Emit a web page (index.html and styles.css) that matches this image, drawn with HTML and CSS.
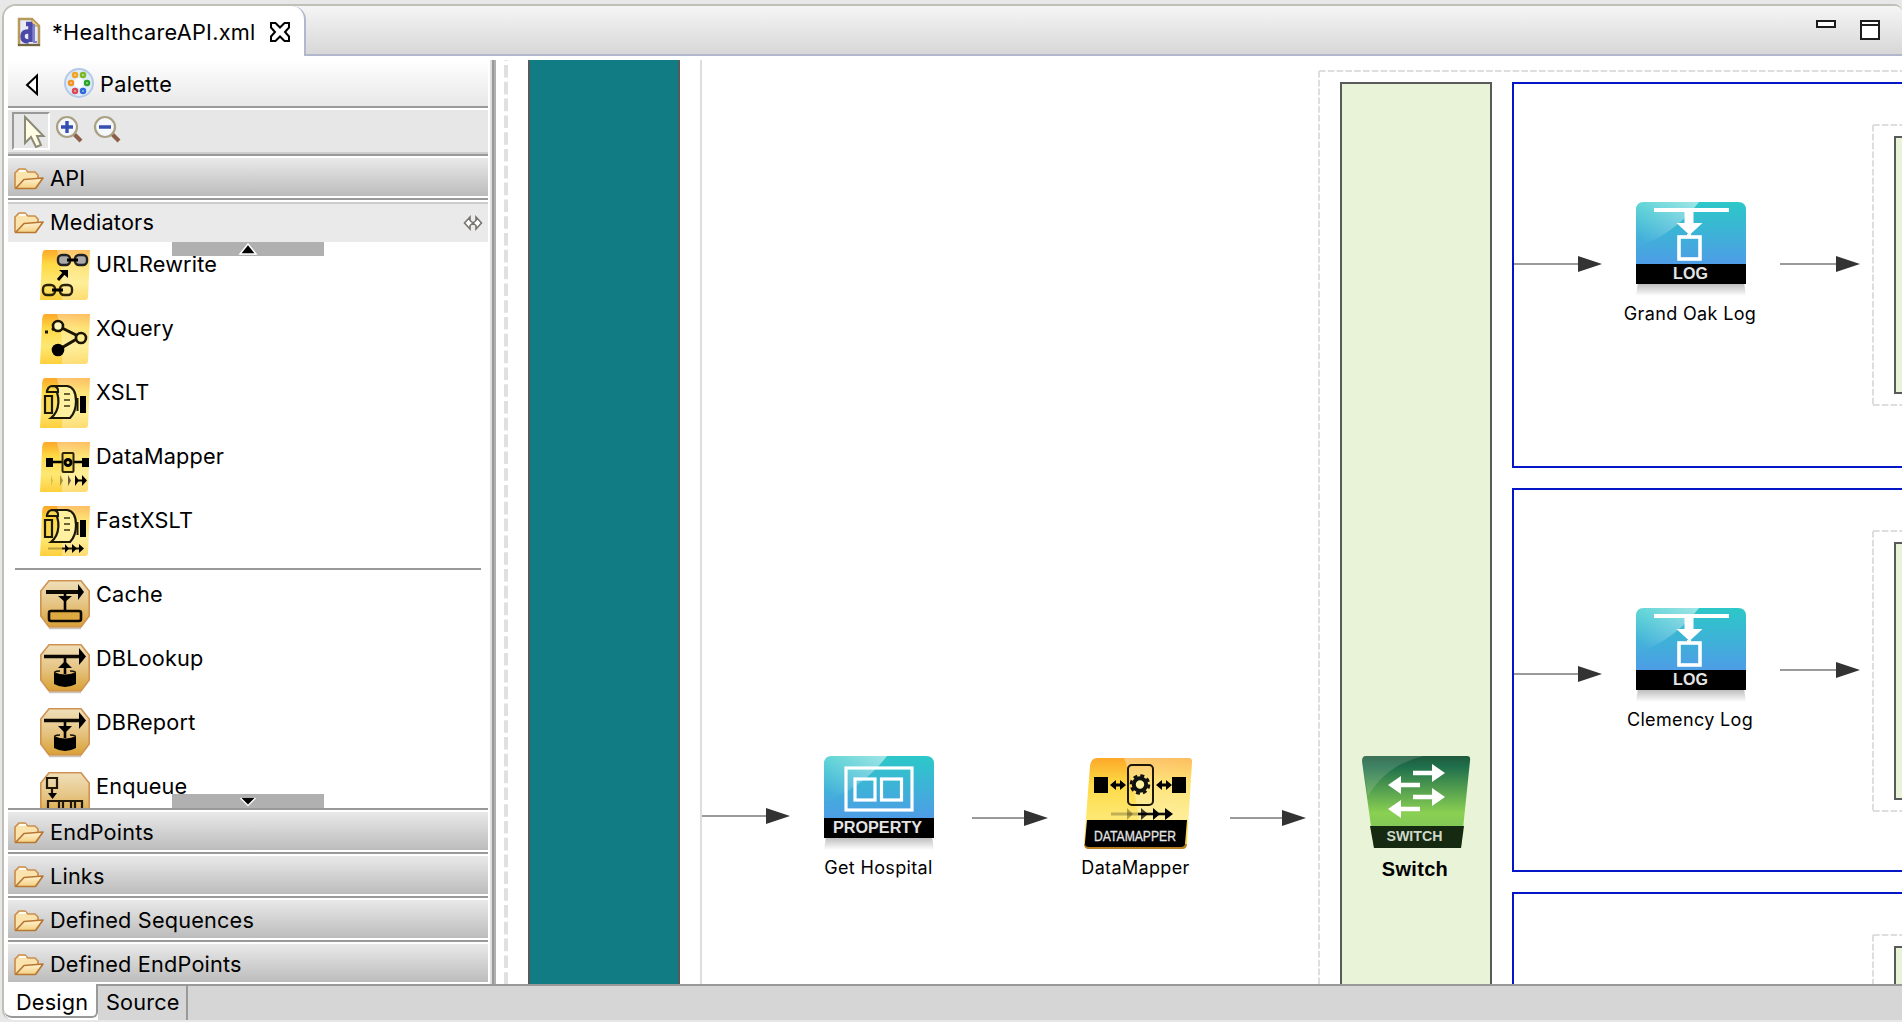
FILE: index.html
```html
<!DOCTYPE html>
<html lang="en">
<head>
<meta charset="utf-8">
<title>HealthcareAPI.xml</title>
<link rel="stylesheet" href="styles.css">
</head>
<body>
<svg class="defs" width="0" height="0" aria-hidden="true">
  <defs>
    <linearGradient id="blue" x1="0" y1="0" x2="0" y2="1"><stop offset="0" stop-color="#2cc8c8"/><stop offset="1" stop-color="#509ae8"/></linearGradient>
    <linearGradient id="shine" x1="1" y1="0" x2="0.1" y2="1"><stop offset="0" stop-color="#fff" stop-opacity=".55"/><stop offset=".9" stop-color="#fff" stop-opacity=".02"/></linearGradient>
    <linearGradient id="shadow" x1="0" y1="0" x2="0" y2="1"><stop offset="0" stop-color="#b4b4b4"/><stop offset="1" stop-color="#fff"/></linearGradient>
    <linearGradient id="yellow" x1="0" y1="0" x2="0" y2="1"><stop offset="0" stop-color="#fca829"/><stop offset=".28" stop-color="#fdd944"/><stop offset=".65" stop-color="#fee873"/><stop offset="1" stop-color="#fdcf3c"/></linearGradient>
    <linearGradient id="gloss" x1="0" y1="0" x2="1" y2="0"><stop offset="0" stop-color="#fff" stop-opacity=".35"/><stop offset="1" stop-color="#fff" stop-opacity=".25"/></linearGradient>
    <linearGradient id="tan" x1="0" y1="0" x2="0" y2="1"><stop offset="0" stop-color="#f0dfba"/><stop offset=".5" stop-color="#e6c584"/><stop offset="1" stop-color="#d8a136"/></linearGradient>
    <linearGradient id="green" x1="0" y1="0" x2="0" y2="1"><stop offset="0" stop-color="#1d5a3c"/><stop offset=".12" stop-color="#20704c"/><stop offset=".62" stop-color="#8ad052"/><stop offset="1" stop-color="#74bc60"/></linearGradient>
    <linearGradient id="foldfill" x1="0" y1="0" x2="0" y2="1"><stop offset="0" stop-color="#fff3d2"/><stop offset="1" stop-color="#f4cf80"/></linearGradient>
    <symbol id="folder" viewBox="0 0 30 22">
      <path d="M1 20V5L5 1h6l3 3h7l3 3v4" fill="#fbe3ad" stroke="#c98f4e" stroke-width="1.7"/>
      <path d="M1.5 20.5L10 11.5 29 10 21.500 20.500Z" fill="url(#foldfill)" stroke="#b87733" stroke-width="1.7" stroke-linejoin="round"/>
      <path d="M5 3h7" stroke="#fffaf0" stroke-width="2"/>
    </symbol>
    <symbol id="ytile" viewBox="0 0 50 50">
      <path d="M5 0H50L48 47Q48 50 45 50H0L2 8Q2 0 5 0Z" fill="url(#yellow)"/>
      <path d="M17 0H50L48 50H22Q24 25 17 0Z" fill="url(#gloss)"/>
    </symbol>
    <symbol id="ttile" viewBox="0 0 50 50">
      <path d="M9 48.500H41" stroke="#c9c4bc" stroke-width="1.500"/>
      <path d="M9 .8H41L49.200 11V36L41 47H9L.8 36V11Z" fill="url(#tan)" stroke="#cf9352" stroke-width="1.600"/>
    </symbol>
    <symbol id="scroll" viewBox="0 0 50 50">
      <path d="M13 5H27C34 6 36 12 36 20C36 28 34 33 30 37H11C20 30 21 14 13 5Z" fill="#fff1a0" stroke="#1c1808" stroke-width="2.200"/>
      <path d="M7 12Q7 5 13 5Q19 6 18 11H7ZM5 15h7v17H5Z" fill="#f8d74c" stroke="#1c1808" stroke-width="2.200"/>
      <path d="M24 13h6M24 19h6M24 25h6" stroke="#3a3412" stroke-width="1.700"/>
      <path d="M40 15h6v17h-6z"/><path d="M37.500 17V30" stroke="#1c1808" stroke-width="2"/>
    </symbol>
    <symbol id="log" viewBox="0 0 110 94">
      <path d="M2 80H108L110 94H0Z" fill="url(#shadow)"/>
      <path d="M0 66V8Q0 0 8 0H102Q110 0 110 8V66Z" fill="url(#blue)"/>
      <path d="M0 8Q0 0 8 0H63Q40 30 5 44L0 46Z" fill="url(#shine)"/>
      <path d="M18 8H93M53 8V24M53 32V36" stroke="#fff" stroke-width="4"/>
      <path d="M48.500 9h9v12h9l-13 12-13-12h8z" fill="#fff"/>
      <rect x="43" y="35" width="21" height="22" fill="none" stroke="#fff" stroke-width="3.600"/>
      <path d="M0 62H110V82H0Z"/>
      <text x="54.500" y="77" class="badge" text-anchor="middle" textLength="35">LOG</text>
    </symbol>
  </defs>
</svg>
<div class="window">
  <header class="tabbar">
    <div class="tab">
      <svg class="file-icon" width="24" height="30" viewBox="0 0 24 30"><path d="M2 2H15L22 9V28H2Z" fill="#e8e9f4" stroke="#b79a5a" stroke-width="2.500"/><path d="M15 2V9H22Z" fill="#eacb85" stroke="#b79a5a"/><path d="M1 28H23" stroke="#6e6647" stroke-width="2"/><path d="M13.500 6V25M11.500 14.500Q5.500 14 5.500 19.500Q5.500 24.500 11.500 24.500M9 7H15" fill="none" stroke="#4a49a8" stroke-width="4.500"/><path d="M17 7V25H20" stroke="#7f82d2" stroke-width="2" fill="none"/></svg>
      <span class="t tab-title">*HealthcareAPI.xml</span>
      <svg class="close" width="22" height="22" viewBox="0 0 22 22"><path d="M2 2H6.500L11 6.500 15.500 2H20V6.500L16 11 20 15.500V20H15.500L11 15.500 6.500 20H2V15.500L6 11 2 6.500Z" fill="#fff" stroke="#000" stroke-width="2"/></svg>
    </div>
    <div class="tab-fill">
      <svg width="70" height="26" viewBox="0 0 70 26"><rect x="2" y="2" width="18" height="6" fill="#fff" stroke="#1c1c1c" stroke-width="2"/><rect x="46" y="2" width="18" height="18" fill="#fff" stroke="#1c1c1c" stroke-width="2"/><path d="M46 6H64" stroke="#1c1c1c" stroke-width="2"/></svg>
    </div>
  </header>
  <main class="editor">
    <aside class="palette">
      <div class="palette-head">
        <svg class="back" width="14" height="24" viewBox="0 0 14 24"><path d="M12 2.500V21L2 12Z" fill="#fff" stroke="#000" stroke-width="2"/></svg>
        <svg class="pal-icon" width="30" height="30" viewBox="0 0 30 30"><circle cx="15" cy="15" r="14" fill="#dfebf8" stroke="#b4c9e6" stroke-width="2"/><circle cx="15" cy="15" r="5" fill="#fafdff"/><g fill="#ffe" stroke-width="2.500"><circle cx="11" cy="7" r="2" stroke="#f0a522"/><circle cx="19" cy="7" r="2" stroke="#7bb927"/><circle cx="7" cy="15" r="2" stroke="#f19325"/><circle cx="23" cy="15" r="2" stroke="#2aa42a"/><circle cx="11" cy="23" r="2" stroke="#d94a55"/><circle cx="19" cy="23" r="2" stroke="#2d69dc"/></g></svg>
        <span class="t">Palette</span>
      </div>
      <div class="tools">
        <span class="tool-on"><svg width="22" height="34" viewBox="0 0 22 34"><path d="M2 2V28L8 22 13 32 18 30 14 21H20.500Z" fill="#fffde4" stroke="#8d8a78" stroke-width="2"/></svg></span>
        <svg width="28" height="28" viewBox="0 0 28 28"><path d="M18 18L26 26" stroke="#8c5f48" stroke-width="4"/><circle cx="12" cy="12" r="10" fill="#f4f8fc" stroke="#aaa184" stroke-width="2.200"/><path d="M6 12H18M12 6V18" stroke="#344fb0" stroke-width="3.400"/></svg>
        <svg width="28" height="28" viewBox="0 0 28 28"><path d="M18 18L26 26" stroke="#8c5f48" stroke-width="4"/><circle cx="12" cy="12" r="10" fill="#f4f8fc" stroke="#aaa184" stroke-width="2.200"/><path d="M6 12H18" stroke="#344fb0" stroke-width="3.400"/></svg>
      </div>
      <div class="drawer"><svg class="folder" width="30" height="22"><use href="#folder"/></svg><span class="t">API</span></div>
      <div class="drawer open"><svg class="folder" width="30" height="22"><use href="#folder"/></svg><span class="t">Mediators</span>
        <svg class="pin" width="20" height="14" viewBox="0 0 20 14"><path d="M7 1L1.500 7 7 13V9.500L10 7 7 4.500ZM13 1L18.500 7 13 13V9.500L10 7 13 4.500Z" fill="#fff" stroke="#77756d" stroke-width="1.600"/></svg></div>
      <div class="items">
        <div class="item"><svg width="50" height="50" viewBox="0 0 50 50"><use href="#ytile"/><g fill="#aaa" stroke="#222" stroke-width="2.400"><rect x="18" y="5" width="12" height="10" rx="4"/><rect x="35" y="5" width="12" height="10" rx="4"/></g><g fill="none" stroke="#2c2408" stroke-width="2.400"><rect x="3" y="35" width="12" height="10" rx="4"/><rect x="20" y="35" width="12" height="10" rx="4"/></g><path d="M27 10H38M12 40H23M18 30L25 22" stroke="#000" stroke-width="3"/><path d="M19 20H28V28Z"/></svg><span class="t">URLRewrite</span></div>
        <div class="item"><svg width="50" height="50" viewBox="0 0 50 50"><use href="#ytile"/><path d="M12 16L18 12L40 23L18 36M5 18H8" fill="none" stroke="#1b1604" stroke-width="3"/><circle cx="18" cy="12" r="5" fill="#fff5bd" stroke="#1b1604" stroke-width="2.600"/><circle cx="41" cy="24" r="5" fill="#ffec8d" stroke="#1b1604" stroke-width="2.600"/><circle cx="18" cy="36" r="6.300"/></svg><span class="t">XQuery</span></div>
        <div class="item"><svg width="50" height="50" viewBox="0 0 50 50"><use href="#ytile"/><use href="#scroll" y="3"/></svg><span class="t">XSLT</span></div>
        <div class="item"><svg width="50" height="50" viewBox="0 0 50 50"><use href="#ytile"/><path d="M10 20H46" stroke="#000" stroke-width="2.500"/><path d="M6 16h7v9H6zM42 16h7v9h-7z"/><rect x="22.500" y="11" width="11" height="19" rx="1" fill="#f8d95a" stroke="#2b2408" stroke-width="2"/><circle cx="28" cy="20.500" r="3" fill="none" stroke="#000" stroke-width="3"/><path d="M36 38.500H46" stroke="#000" stroke-width="2"/><path d="M35 33l4 5.500-4 5.500zM42 33l5 5.500-5 5.500z"/><path d="M28 33l3 5.500-3 5.500z" opacity=".6"/><path d="M20 33l3 5.500-3 5.500z" opacity=".35"/><path d="M11 33l2 5.500-2 5.500z" opacity=".15"/></svg><span class="t">DataMapper</span></div>
        <div class="item"><svg width="50" height="50" viewBox="0 0 50 50"><use href="#ytile"/><use href="#scroll" y="-1"/><path d="M22 42.500H42" stroke="#221c06" stroke-width="2"/><path d="M8 42.500H22" stroke="#221c06" stroke-width="2" opacity=".3"/><path d="M32 38l5 4.500-5 4.500zM39 38l5 4.500-5 4.500zM25 38l4 4.500-4 4.500z"/></svg><span class="t">FastXSLT</span></div>
        <hr class="rule">
        <div class="item"><svg width="50" height="50" viewBox="0 0 50 50"><use href="#ttile"/><path d="M6 12H40" stroke="#0c0903" stroke-width="4"/><path d="M38 4l6 8-6 8z"/><path d="M25 13V31" stroke="#000" stroke-width="2.600"/><path d="M18 16H32L25 22Z"/><rect x="9" y="31" width="32" height="10" rx="2" fill="#dda941" stroke="#0c0903" stroke-width="2.600"/></svg><span class="t">Cache</span></div>
        <div class="item"><svg width="50" height="50" viewBox="0 0 50 50"><use href="#ttile"/><path d="M4 12.500H40" stroke="#0c0903" stroke-width="3.600"/><path d="M39 4l7 8.500-7 8.500z"/><path d="M25 14V30" stroke="#000" stroke-width="2.600"/><path d="M18 24L25 17 32 24ZM14 28Q25 33 36 28V40Q25 46 14 40Z"/><path d="M20 27Q12 27 16 30M30 27Q38 27 34 30" fill="none" stroke="#1a1408" stroke-width="1.500"/></svg><span class="t">DBLookup</span></div>
        <div class="item"><svg width="50" height="50" viewBox="0 0 50 50"><use href="#ttile"/><path d="M4 12.500H40" stroke="#0c0903" stroke-width="3.600"/><path d="M39 4l7 8.500-7 8.500z"/><path d="M25 14V30" stroke="#000" stroke-width="2.600"/><path d="M18 18L25 25 32 18ZM14 28Q25 33 36 28V40Q25 46 14 40Z"/><path d="M20 27Q12 27 16 30M30 27Q38 27 34 30" fill="none" stroke="#1a1408" stroke-width="1.500"/></svg><span class="t">DBReport</span></div>
        <div class="item"><svg width="50" height="50" viewBox="0 0 50 50"><use href="#ttile"/><path d="M7 6H17V16H7ZM12 16V24M8 44V29H42V44M19 29V44M23 29V44M31 29V44M35 29V44" fill="none" stroke="#1f1808" stroke-width="2.200"/><path d="M8 21H17L12.500 27Z"/></svg><span class="t">Enqueue</span></div>
        <div class="scroll up"><svg width="18" height="12" viewBox="0 0 18 12"><path d="M1 11L9 1 17 11Z" fill="#000" stroke="#fff" stroke-width="1.500"/></svg></div>
        <div class="scroll down"><svg width="18" height="10" viewBox="0 0 18 10"><path d="M1.500 1H16.500L9 9Z"/><path d="M1.500 1L9 8.500 16.500 1" fill="none" stroke="#fff" stroke-width="1.500"/></svg></div>
      </div>
      <div class="drawer"><svg class="folder" width="30" height="22"><use href="#folder"/></svg><span class="t">EndPoints</span></div>
      <div class="drawer"><svg class="folder" width="30" height="22"><use href="#folder"/></svg><span class="t">Links</span></div>
      <div class="drawer"><svg class="folder" width="30" height="22"><use href="#folder"/></svg><span class="t">Defined Sequences</span></div>
      <div class="drawer"><svg class="folder" width="30" height="22"><use href="#folder"/></svg><span class="t">Defined EndPoints</span></div>
    </aside>
    <div class="sash"></div>
    <!-- Diagram: coordinates are offset by the canvas origin (500, 60) -->
    <section class="canvas">
      <svg class="lines" width="1402" height="924" viewBox="500 60 1402 924">
        <path d="M506 48.200V990" stroke="#e0e0e0" stroke-width="4" stroke-dasharray="12.600 4.200"/>
        <rect x="529" y="50" width="150" height="950" fill="#127c84" stroke="#58595a" stroke-width="2"/>
        <path d="M701 60V990" stroke="#dedede" stroke-width="2"/>
        <g fill="none" stroke="#dedede" stroke-width="2" stroke-dasharray="6.600 2.200">
          <path d="M1319 71V990"/><path d="M1319 71H1902"/>
          <path d="M1873 125V405"/><path d="M1873 125H1902"/><path d="M1873 405H1902"/>
          <path d="M1873 531V811"/><path d="M1873 531H1902"/><path d="M1873 811H1902"/>
          <path d="M1873 935V990"/><path d="M1873 935H1902"/>
        </g>
        <g fill="#e8f3d8" stroke="#595a5a" stroke-width="2">
          <rect x="1341" y="83" width="150" height="950"/>
          <rect x="1895" y="137" width="150" height="256"/><rect x="1895" y="543" width="150" height="256"/><rect x="1895" y="947" width="150" height="256"/>
        </g>
        <g fill="none" stroke="#0516c6" stroke-width="2"><rect x="1513" y="83" width="500" height="384"/><rect x="1513" y="489" width="500" height="382"/><rect x="1513" y="893" width="500" height="382"/></g>
        <path d="M702 816H768M972 818H1026M1230 818H1284M1514 264H1580M1780 264H1838M1514 674H1580M1780 670H1838" stroke="#9a9a9a" stroke-width="2"/>
        <path d="M766 808l24 8-24 8zM1024 810l24 8-24 8zM1282 810l24 8-24 8zM1578 256l24 8-24 8zM1836 256l24 8-24 8zM1578 666l24 8-24 8zM1836 662l24 8-24 8z" fill="#333"/>
      </svg>
      <div class="node property"><svg width="110" height="94" viewBox="0 0 110 94"><path d="M2 80H108L110 94H0Z" fill="url(#shadow)"/><path d="M0 66V8Q0 0 8 0H102Q110 0 110 8V66Z" fill="url(#blue)"/><path d="M0 8Q0 0 8 0H63Q40 30 5 44L0 46Z" fill="url(#shine)"/><g fill="none" stroke="#fff" stroke-width="3.200"><rect x="22" y="12" width="66" height="42"/><rect x="31" y="23" width="20" height="21"/><rect x="57.500" y="23" width="20" height="21"/></g><path d="M0 62H110V82H0Z"/><text x="53.500" y="77" class="badge" text-anchor="middle" textLength="89" lengthAdjust="spacingAndGlyphs">PROPERTY</text></svg><span class="label l-hospital">Get Hospital</span></div>
      <div class="node mapper"><svg width="110" height="94" viewBox="0 0 110 94"><path d="M14 2H106Q109 2 109 5L104 88Q104 92 100 93H5Q1 92 1 87L7 10Q8 2 14 2Z" fill="url(#yellow)"/><path d="M41 2H109L106 64H56Q52 30 41 2Z" fill="url(#gloss)"/><path d="M2 88Q2 92 6 92H99Q103 92 103 88" fill="none" stroke="#b87e22" stroke-width="2"/><path d="M4 64H104L102 88Q102 91 98 91H6Q1 91 2 86Z"/><path d="M11 21h14v16H11zM89 21h14v16H89z"/><path d="M30 29H40M76 29H86" stroke="#000" stroke-width="3"/><path d="M27 29l6-5v10zM43 29l-6-5v10zM73 29l6-5v10zM89 29l-6-5v10z"/><rect x="45" y="9" width="25" height="40" rx="4" fill="none" stroke="#1c1706" stroke-width="2"/><circle cx="57" cy="28.500" r="6.200" fill="#fff2a0" stroke="#111" stroke-width="4"/><circle cx="57" cy="28.500" r="9" fill="none" stroke="#111" stroke-width="2.600" stroke-dasharray="4 3.070"/><path d="M55 58H84" stroke="#111" stroke-width="2.600"/><path d="M28 58H55" stroke="#111" stroke-width="3" opacity=".25"/><path d="M82 52l8 6-8 6zM70 52l7 6-7 6z"/><path d="M58 52l7 6-7 6z" opacity=".75"/><path d="M44 52l6 6-6 6z" opacity=".3"/><text x="11" y="85" class="badge thin" textLength="82" lengthAdjust="spacingAndGlyphs">DATAMAPPER</text></svg><span class="label l-mapper">DataMapper</span></div>
      <div class="node switch"><svg width="110" height="94" viewBox="0 0 110 94"><path d="M4 0H105Q109 0 108 5L99 92H12L0 5Q0 0 4 0Z" fill="url(#green)"/><path d="M0 5Q0 0 4 0H62Q25 8 6 40Z" fill="#fff" opacity=".14"/><path d="M8 70H102L99 92H12Z" fill="#152a10"/><path d="M51 17H74M36 29H58M51 41H74M36 53H58" stroke="#fff" stroke-width="4.600"/><path d="M70 8l13 9-13 9zM39 20l-13 9 13 9zM70 32l13 9-13 9zM39 44l-13 9 13 9z" fill="#fff"/><text x="24.500" y="85" class="badge small" textLength="56" lengthAdjust="spacingAndGlyphs">SWITCH</text></svg><span class="label l-switch">Switch</span></div>
      <div class="node log-a"><svg width="110" height="94"><use href="#log"/></svg><span class="label l-grand">Grand Oak Log</span></div>
      <div class="node log-b"><svg width="110" height="94"><use href="#log"/></svg><span class="label l-clem">Clemency Log</span></div>
    </section>
  </main>
  <footer class="views"><span class="view active t">Design</span><span class="view t">Source</span><span class="view-fill"></span></footer>
</div>
</body>
</html>
```
FILE: styles.css
```css
* { box-sizing: border-box; }
body { margin: 0; width: 1902px; height: 1022px; overflow: hidden; background: #e8e8e8; font-family: Inter, "Liberation Sans", sans-serif; color: #000; }
svg { display: block; flex: none; overflow: visible; }
.defs { position: absolute; }
.t { font-size: 21.7px; line-height: 26px; white-space: nowrap; letter-spacing: 0.18px; }
.window { margin: 4px 0 0 2px; width: 1900px; height: 1016px; border: 2px solid #c0c0b8; border-right: 0; border-bottom: 0; border-radius: 14px 8px 0 10px; background: #fff; overflow: hidden; display: flex; flex-direction: column; }
.tabbar { display: flex; height: 50px; flex: none; background: linear-gradient(#f5f5f5, #d6d6d6); }
.tab { display: flex; align-items: flex-start; width: 302px; background: #fff; border-right: 2px solid #b2b7cc; border-radius: 0 14px 0 0; }
.file-icon { margin: 11px 0 0 13px; }
.tab-title { margin: 13px 0 0 11px; width: 205px; letter-spacing: 0.25px; }
.close { margin: 15px 0 0 12px; }
.tab-fill { flex: 1; border-bottom: 2px solid #b2b7cc; display: flex; justify-content: flex-end; padding: 13px 17px 0 0; }
.editor { flex: none; height: 928px; padding: 4px 0 0 4px; display: flex; }
.palette { width: 480px; height: 924px; display: flex; flex-direction: column; }
.palette-head { height: 48px; background: linear-gradient(#fff, #e8e8e8); border-bottom: 2px solid #999; display: flex; flex: none; }
.back { margin: 13px 0 0 17px; }
.pal-icon { margin: 8px 6px 0 25px; }
.palette-head .t { margin-top: 11px; letter-spacing: 0.3px; }
.tools { height: 46px; flex: none; margin-top: 2px; background: #e7e7e7; border-bottom: 2px solid #999; box-shadow: inset 0 -2px #ccc; display: flex; }
.tools > svg { margin: 5px 0 0 10px; }
.tools > .tool-on + svg { margin-left: 5px; }
.tool-on { width: 38px; height: 38px; margin: 2px 0 0 4px; border: 2px solid #fff; border-top-color: #999; border-left-color: #999; padding: 1px 0 0 9px; }
.drawer { display: flex; flex: none; height: 38px; margin-top: 2px; padding-left: 6px; background: linear-gradient(#e9e9e9, #bcbcbc); position: relative; }
.drawer + .drawer { margin-top: 6px; }
.drawer + .drawer::before { content: ""; position: absolute; left: 0; right: 0; top: -4px; height: 2px; background: #999; }
.folder { margin: 10px 0 0; }
.drawer .t { margin: 7px 0 0 6px; }
.drawer + .drawer.open { margin-top: 8px; background: #eaeaea; box-shadow: 0 -2px #ccc; }
.drawer + .drawer.open::before { top: -6px; }
.drawer.open .folder { margin-top: 8px; }
.drawer.open .t { margin-top: 5px; }
.pin { margin: 12px 5px 0 auto; }
.items { position: relative; height: 568px; flex: none; overflow: hidden; border-bottom: 2px solid #999; padding: 8px 7px 0; }
.item { display: flex; height: 50px; margin: 0 0 14px 25px; }
.item .t { margin: 1px 0 0 6px; }
.rule { border: 0; height: 2px; background: #999; margin: -2px 0 10px; }
.scroll { position: absolute; left: 164px; width: 152px; height: 14px; background: #b0b0b0; display: flex; justify-content: center; }
.up { top: 0; padding-top: 1px; }
.down { bottom: 0; padding-top: 3px; }
.sash { width: 6px; margin-left: 2px; background: linear-gradient(90deg, #dedede 2px, #999 2px, #999 4px, #b0b0b0 4px); }
.canvas { position: relative; width: 1402px; height: 924px; margin-left: 4px; overflow: hidden; }
.lines { position: absolute; left: 0; top: 0; }
.node { position: absolute; width: 110px; display: flex; flex-direction: column; align-items: center; }
.property { left: 324px; top: 696px; }
.mapper { left: 583px; top: 696px; }
.switch { left: 862px; top: 696px; }
.log-a { left: 1136px; top: 142px; }
.log-b { left: 1136px; top: 548px; }
.label { margin-top: 6px; margin-left: -1px; font-size: 18px; line-height: 24px; letter-spacing: 0.35px; white-space: nowrap; }
.l-mapper { margin-left: -5px; }
.l-clem, .l-grand { margin-left: -2px; }
.l-switch { font: bold 20px/24px "Liberation Sans", sans-serif; letter-spacing: 0.3px; margin: 7px 0 0 -4px; }
.badge { font: bold 16px "Liberation Sans", sans-serif; fill: #e4e4e4; }
.thin { font-weight: normal; font-size: 15px; stroke: #e4e4e4; stroke-width: 0.3px; }
.small { font-size: 15px; fill: #cfd8c8; }
.views { height: 38px; flex: none; display: flex; }
.view { height: 36px; line-height: 33px; background: #d6d6d6; border-top: 2px solid #999; border-right: 2px solid #999; width: 90px; padding-left: 8px; }
.view.active { height: 34px; line-height: 36px; width: 94px; background: #fff; border-top: 0; border-bottom: 2px solid #999; border-radius: 0 0 6px 8px; padding-left: 12px; }
.view-fill { flex: 1; height: 36px; background: #d6d6d6; border-top: 2px solid #999; }
```
